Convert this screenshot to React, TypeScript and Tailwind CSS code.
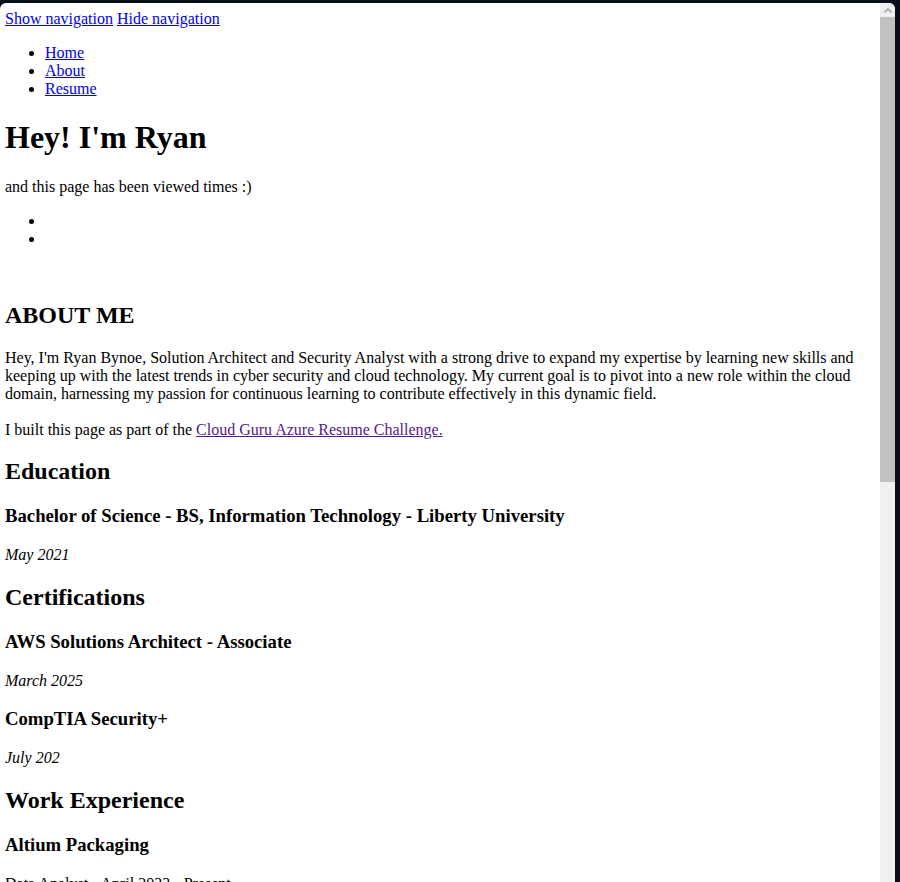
export default function App() {
  return (
    <div className="h-[882px] w-[900px] overflow-hidden bg-[#0a0d1b] pt-[3px] pr-[5px]">
      <div className="flex h-full overflow-hidden rounded-t-[6px] bg-white">
        <div className="h-full flex-1 overflow-hidden pt-[7px] pl-[5px] pr-[8px] font-['Liberation_Serif',serif] text-[16px] leading-[normal] text-black">
          <div>
            <a href="#" className="text-[#0000ee] underline">Show navigation</a>{' '}
            <a href="#" className="text-[#0000ee] underline">Hide navigation</a>
          </div>
          <ul className="my-4 list-disc pl-10">
            <li><a href="#" className="text-[#0000ee] underline">Home</a></li>
            <li><a href="#" className="text-[#0000ee] underline">About</a></li>
            <li><a href="#" className="text-[#0000ee] underline">Resume</a></li>
          </ul>
          <h1 className="my-[21.44px] text-[32px] font-bold">Hey! I'm Ryan</h1>
          <p className="my-4">and this page has been viewed times :)</p>
          <ul className="my-4 list-disc pl-10">
            <li className="h-[18.4px]"></li>
            <li className="h-[18.4px]"></li>
          </ul>
          <br />
          <h2 className="mt-[19px] mb-[19.92px] text-[24px] font-bold">ABOUT ME</h2>
          <p className="my-4">
            Hey, I'm Ryan Bynoe, Solution Architect and Security Analyst with a strong drive to expand my expertise by learning new skills and keeping up with the latest trends in cyber security and cloud technology. My current goal is to pivot into a new role within the cloud domain, harnessing my passion for continuous learning to contribute effectively in this dynamic field.
          </p>
          <p className="mt-[18px] mb-4">
            I built this page as part of the{' '}
            <a href="#" className="text-[#551a8b] underline">Cloud Guru Azure Resume Challenge.</a>
          </p>
          <h2 className="my-[19.92px] text-[24px] font-bold">Education</h2>
          <h3 className="my-[18.72px] text-[18.72px] font-bold">Bachelor of Science - BS, Information Technology - Liberty University</h3>
          <p className="my-4 italic">May 2021</p>
          <h2 className="my-[19.92px] text-[24px] font-bold">Certifications</h2>
          <h3 className="my-[18.72px] text-[18.72px] font-bold">AWS Solutions Architect - Associate</h3>
          <p className="my-4 italic">March 2025</p>
          <h3 className="my-[18.72px] text-[18.72px] font-bold">CompTIA Security+</h3>
          <p className="my-4 italic">July 202</p>
          <h2 className="my-[19.92px] text-[24px] font-bold">Work Experience</h2>
          <h3 className="my-[18.72px] text-[18.72px] font-bold">Altium Packaging</h3>
          <p className="my-4">Data Analyst - April 2023 - Present</p>
        </div>
        <div className="flex w-[15px] flex-col bg-[#f0f0f0]">
          <div className="flex h-[14px] items-center justify-center">
            <svg width="8" height="5" viewBox="0 0 8 5">
              <path d="M0.5 4.5 L4 1 L7.5 4.5" fill="none" stroke="#a3a3a3" strokeWidth="1.6" />
            </svg>
          </div>
          <div className="h-[465px] bg-[#c1c1c1]"></div>
        </div>
      </div>
    </div>
  );
}
